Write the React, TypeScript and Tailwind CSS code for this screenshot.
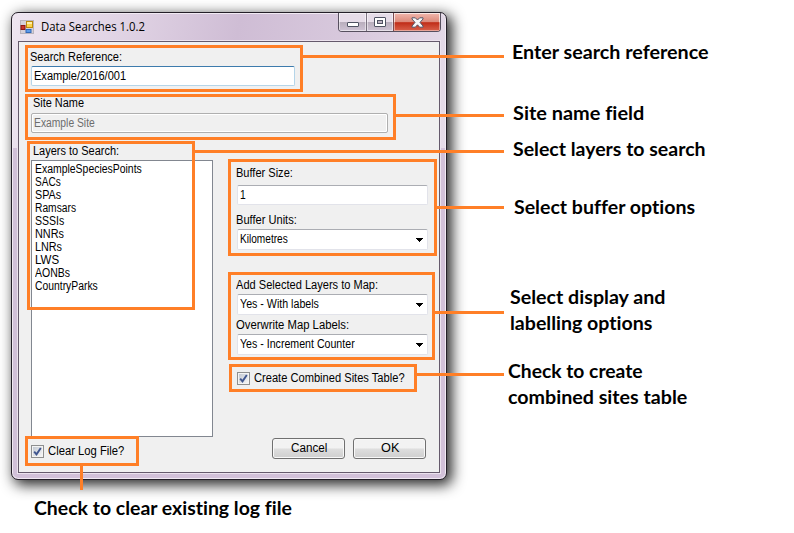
import { useLayoutEffect, useRef, useState } from "react";

const UI = "font-['Liberation_Sans',Arial,sans-serif] text-[12px] leading-[16px]";

/** A single line of text condensed or widened to a given width. */
function Fit({ text, w, className = "" }: { text: string; w: number; className?: string }) {
  const ref = useRef<HTMLSpanElement>(null);
  const [scale, setScale] = useState(1);
  useLayoutEffect(() => {
    if (ref.current) setScale(w / ref.current.offsetWidth);
  }, [w, text]);
  return (
    <span className={`block ${className}`} style={{ width: w }}>
      <span ref={ref} className="inline-block origin-left whitespace-nowrap align-top" style={{ transform: `scaleX(${scale})` }}>
        {text}
      </span>
    </span>
  );
}

function Select({ text, w, className = "" }: { text: string; w: number; className?: string }) {
  return (
    <div className={`flex w-[191px] items-center justify-between rounded-[2px] border border-[#e2e3ea] border-t-[#abadb3] bg-white pl-[2px] pr-[4px] ${className}`}>
      <Fit text={text} w={w} className="-mt-px" />
      <svg width="7" height="4" viewBox="0 0 7 4" shapeRendering="crispEdges" className="mt-px">
        <path d="M0 0H7V1H6V2H5V3H4V4H3V3H2V2H1V1H0Z" fill="#000" />
      </svg>
    </div>
  );
}

function Check({ text, w, gap }: { text: string; w: number; gap: string }) {
  return (
    <div className={`flex items-center ${gap}`}>
      <div className="flex size-[13px] shrink-0 items-center justify-center border border-[#8e8f8f] bg-[#f4f4f4] p-px">
        <svg width="9" height="9" viewBox="0 0 9 9" className="bg-gradient-to-br from-[#c4cad3] to-[#f6f6f6]">
          <path d="M1.2 4.6L3.5 7.4L7.8 1" fill="none" stroke="#40568f" strokeWidth="1.9" />
        </svg>
      </div>
      <Fit text={text} w={w} />
    </div>
  );
}

function Button({ text, w }: { text: string; w: number }) {
  return (
    <div className="flex h-[21px] w-[73px] items-center justify-center rounded-[3px] border border-[#707070] bg-gradient-to-b from-[#f2f2f2] from-45% via-[#dddddd] via-55% to-[#cfcfcf] shadow-[inset_0_0_0_1px_#f8f8f8]">
      <Fit text={text} w={w} className="-mt-px" />
    </div>
  );
}

const layers: [string, number][] = [
  ["ExampleSpeciesPoints", 107],
  ["SACs", 26],
  ["SPAs", 26],
  ["Ramsars", 41],
  ["SSSIs", 29],
  ["NNRs", 29],
  ["LNRs", 27],
  ["LWS", 24],
  ["AONBs", 35],
  ["CountryParks", 63],
];

const outlines = [
  "left-[25px] top-[45px] w-[278px] h-[47px]",
  "left-[25px] top-[94px] w-[371px] h-[46px]",
  "left-[27px] top-[141px] w-[168px] h-[169px]",
  "left-[228px] top-[159px] w-[209px] h-[97px]",
  "left-[228px] top-[272px] w-[207px] h-[88px]",
  "left-[229px] top-[364px] w-[188px] h-[28px]",
  "left-[25px] top-[436px] w-[114px] h-[30px]",
];

const connectors = [
  "left-[303px] top-[55px] w-[201px] h-[3px]",
  "left-[396px] top-[114px] w-[108px] h-[3px]",
  "left-[195px] top-[150px] w-[309px] h-[3px]",
  "left-[437px] top-[206px] w-[67px] h-[3px]",
  "left-[435px] top-[311px] w-[69px] h-[3px]",
  "left-[417px] top-[373px] w-[87px] h-[3px]",
  "left-[80px] top-[466px] w-[3px] h-[24px]",
];

const notes: { at: string; text: string; w: number }[] = [
  { at: "left-[512px] top-[39px]", text: "Enter search reference", w: 197 },
  { at: "left-[513px] top-[100px]", text: "Site name field", w: 131 },
  { at: "left-[513px] top-[136px]", text: "Select layers to search", w: 193 },
  { at: "left-[514px] top-[194px]", text: "Select buffer options", w: 181 },
  { at: "left-[510px] top-[284px]", text: "Select display and", w: 155 },
  { at: "left-[510px] top-[310px]", text: "labelling options", w: 142 },
  { at: "left-[508px] top-[358px]", text: "Check to create", w: 135 },
  { at: "left-[508px] top-[384px]", text: "combined sites table", w: 179 },
  { at: "left-[34px] top-[495px]", text: "Check to clear existing log file", w: 258 },
];

function TitleBar() {
  return (
    <div className="flex h-[28px] items-start justify-between">
      <div className="flex items-center gap-[7px] pl-[2px] pt-[6px]">
        <svg width="14" height="14" viewBox="0 0 14 14">
          <rect x="0.5" y="0.5" width="13" height="13" fill="#d5d0d8" stroke="#b9b4bd" />
          <rect x="1" y="5.5" width="4" height="4" fill="#c8352b" stroke="#8d1711" />
          <rect x="6.5" y="1.5" width="6" height="6" fill="#fbd34b" stroke="#bd8a0b" />
          <rect x="7" y="2" width="5" height="2" fill="#fff0a8" />
          <rect x="6" y="9.5" width="5" height="3" fill="#5b9bea" stroke="#3268b8" />
        </svg>
        <Fit text="Data Searches 1.0.2" w={104} className="font-['Open_Sans',sans-serif] text-[12px] leading-[16px]" />
      </div>
      <div className="-mr-px flex h-[19px] w-[103px] overflow-hidden rounded-b-[4px] border border-t-0 border-[#57505f]">
        <div className="flex w-[28px] items-center justify-center border-r border-[#7b7281] bg-gradient-to-b from-[#e6dce8] from-48% via-[#b9aebd] via-52% to-[#cfc3d4] shadow-[inset_0_0_0_1px_#ffffff80]">
          <svg width="12" height="5" viewBox="0 0 12 5" className="mt-[4px]">
            <rect x="0.5" y="0.5" width="11" height="4" rx="0.5" fill="#fff" stroke="#4f5262" />
          </svg>
        </div>
        <div className="flex w-[27px] items-center justify-center border-r border-[#7b4a50] bg-gradient-to-b from-[#e6dce8] from-48% via-[#b9aebd] via-52% to-[#cfc3d4] shadow-[inset_0_0_0_1px_#ffffff80]">
          <svg width="12" height="10" viewBox="0 0 12 10">
            <rect x="0.5" y="0.5" width="11" height="9" rx="0.5" fill="#fff" stroke="#4f5262" />
            <rect x="3.5" y="3.5" width="5" height="3" fill="#bdb3c2" stroke="#4f5262" />
          </svg>
        </div>
        <div className="flex flex-1 items-center justify-center bg-gradient-to-b from-[#efb3a9] from-5% via-[#dd8d7e] via-45% to-[#d9604a] shadow-[inset_0_0_0_1px_#ffffff70]">
          <div className="flex h-full w-full items-center justify-center bg-gradient-to-b from-transparent from-48% via-[#c02c17] via-54% to-[#d9604a] shadow-[inset_0_0_0_1px_#ffffff70]">
            <svg width="13" height="11" viewBox="0 0 13 11">
              <path d="M1 .8H4.3L6.5 3L8.7 .8H12V2L9 5.4L12 9V10.2H8.7L6.5 7.8L4.3 10.2H1V9L4 5.4L1 2Z" fill="#f7f7f7" stroke="#55576a" strokeWidth="1" />
            </svg>
          </div>
        </div>
      </div>
    </div>
  );
}

function Form() {
  return (
    <div className={`h-[432px] border border-[#655a6c] bg-[#f0f0f0] pl-[12px] pt-[7px] shadow-[0_0_0_1px_#ece3ee] ${UI}`}>
      <Fit text="Search Reference:" w={92} className="-ml-px" />
      <div className="mt-px flex h-[20px] w-[264px] items-center rounded-[2px] border border-[#b5d5e9] border-t-[#3d7bad] bg-white pl-[2px]">
        <Fit text="Example/2016/001" w={92} />
      </div>
      <Fit text="Site Name" w={51} className="ml-[2px] mt-[9px]" />
      <div className="mt-[2px] flex h-[20px] w-[357px] items-center rounded-[2px] border border-[#afafaf] bg-[#f0f0f0] pl-[2px] text-[#6d6d6d] shadow-[inset_0_0_0_1px_#fff]">
        <Fit text="Example Site" w={61} />
      </div>
      <div className="mt-[10px] flex">
        <div className="w-[182px]">
          <Fit text="Layers to Search:" w={86} className="ml-[2px]" />
          <div className="mt-px h-[277px] border border-[#828790] bg-white pl-[3px] pt-[2px] leading-[13px]">
            {layers.map(([name, w]) => (
              <Fit key={name} text={name} w={w} />
            ))}
          </div>
          <div className="mt-[6px]">
            <Check text="Clear Log File?" w={76} gap="gap-[4px]" />
          </div>
        </div>
        <div className="ml-[24px] w-[191px] pt-[22px]">
          <Fit text="Buffer Size:" w={57} className="-ml-px" />
          <div className="mt-[4px] flex h-[20px] items-center rounded-[2px] border border-[#e2e3ea] border-t-[#abadb3] bg-white pl-[2px]">
            <Fit text="1" w={6} />
          </div>
          <Fit text="Buffer Units:" w={61} className="-ml-px mt-[7px]" />
          <Select text="Kilometres" w={48} className="mt-px h-[21px]" />
          <Fit text="Add Selected Layers to Map:" w={142} className="-ml-px mt-[27px]" />
          <Select text="Yes - With labels" w={79} className="mt-px h-[21px]" />
          <Fit text="Overwrite Map Labels:" w={113} className="-ml-px mt-[2px]" />
          <Select text="Yes - Increment Counter" w={115} className="mt-px h-[21px]" />
          <div className="mt-[15px]">
            <Check text="Create Combined Sites Table?" w={151} gap="gap-[4px]" />
          </div>
          <div className="ml-[35px] mt-[52px] flex gap-[8px]">
            <Button text="Cancel" w={36} />
            <Button text="OK" w={18} />
          </div>
        </div>
      </div>
    </div>
  );
}

export default function App() {
  return (
    <div className="relative h-[533px] w-[794px] overflow-hidden bg-white pl-[11px] pt-[12px] text-black">
      <div className="h-[468px] w-[436px] rounded-[7px] border border-[#241f28] bg-[#d2c1d9] bg-[linear-gradient(100deg,#eee5f0_0%,#e0d3e4_25%,#cfbdd5_50%,#d8c9dd_75%,#e6dce9_100%)] bg-[length:100%_135px] bg-no-repeat px-[6px] shadow-[inset_0_0_0_1px_#f1eaf3,4px_4px_14px_1px_rgba(0,0,0,0.85)]">
        <TitleBar />
        <Form />
      </div>
      {outlines.map((c) => (
        <div key={c} className={`absolute border-[3px] border-[#ff7f27] ${c}`} />
      ))}
      {connectors.map((c) => (
        <div key={c} className={`absolute bg-[#ff7f27] ${c}`} />
      ))}
      {notes.map((n) => (
        <div key={n.text} className={`absolute font-['Lato',sans-serif] text-[19px] font-bold leading-[26px] [font-variant-ligatures:none] ${n.at}`}>
          <Fit text={n.text} w={n.w} />
        </div>
      ))}
    </div>
  );
}
